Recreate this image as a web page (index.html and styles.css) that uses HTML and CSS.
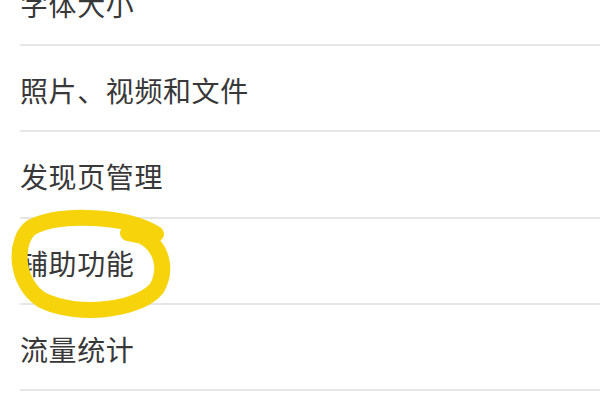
FILE: index.html
```html
<!DOCTYPE html>
<html lang="zh-CN">
<head>
<meta charset="utf-8">
<title>设置</title>
<link rel="stylesheet" href="styles.css">
</head>
<body>
<div class="page">
  <ul class="list">
    <li class="row"><span class="label">字体大小</span></li>
    <li class="row"><span class="label">照片、视频和文件</span></li>
    <li class="row"><span class="label">发现页管理</span></li>
    <li class="row"><span class="label">辅助功能</span></li>
    <li class="row"><span class="label">流量统计</span></li>
  </ul>
  <svg class="mark" width="600" height="400" viewBox="0 0 600 400" aria-hidden="true">
    <path d="M 156 234 C 128 216, 62 212, 32 227 C 14 239, 14 282, 42 300 C 78 318, 140 310, 157 288 C 167 270, 163 247, 142 236 L 128 233"
          fill="none" stroke="#f6d30b" stroke-width="16" stroke-linecap="round" stroke-linejoin="round"/>
  </svg>
</div>
</body>
</html>
```
FILE: styles.css
```css
html, body {
  margin: 0;
  padding: 0;
  background: #ffffff;
}
.page {
  position: relative;
  width: 600px;
  height: 400px;
  overflow: hidden;
  background: #ffffff;
}
.list {
  list-style: none;
  margin: -40.6px 0 0 0;
  padding: 0;
}
.row {
  box-sizing: border-box;
  height: 86.4px;
  margin-left: 20px;
  border-bottom: 2px solid #e6e6e6;
  display: flex;
  align-items: center;
  padding-top: 4px;
}
.label {
  font-family: "Noto Sans CJK SC", "Noto Sans", sans-serif;
  font-size: 28px;
  line-height: 1;
  color: #383838;
  letter-spacing: 0.6px;
}
.mark {
  position: absolute;
  left: 0;
  top: 0;
  pointer-events: none;
}
```
